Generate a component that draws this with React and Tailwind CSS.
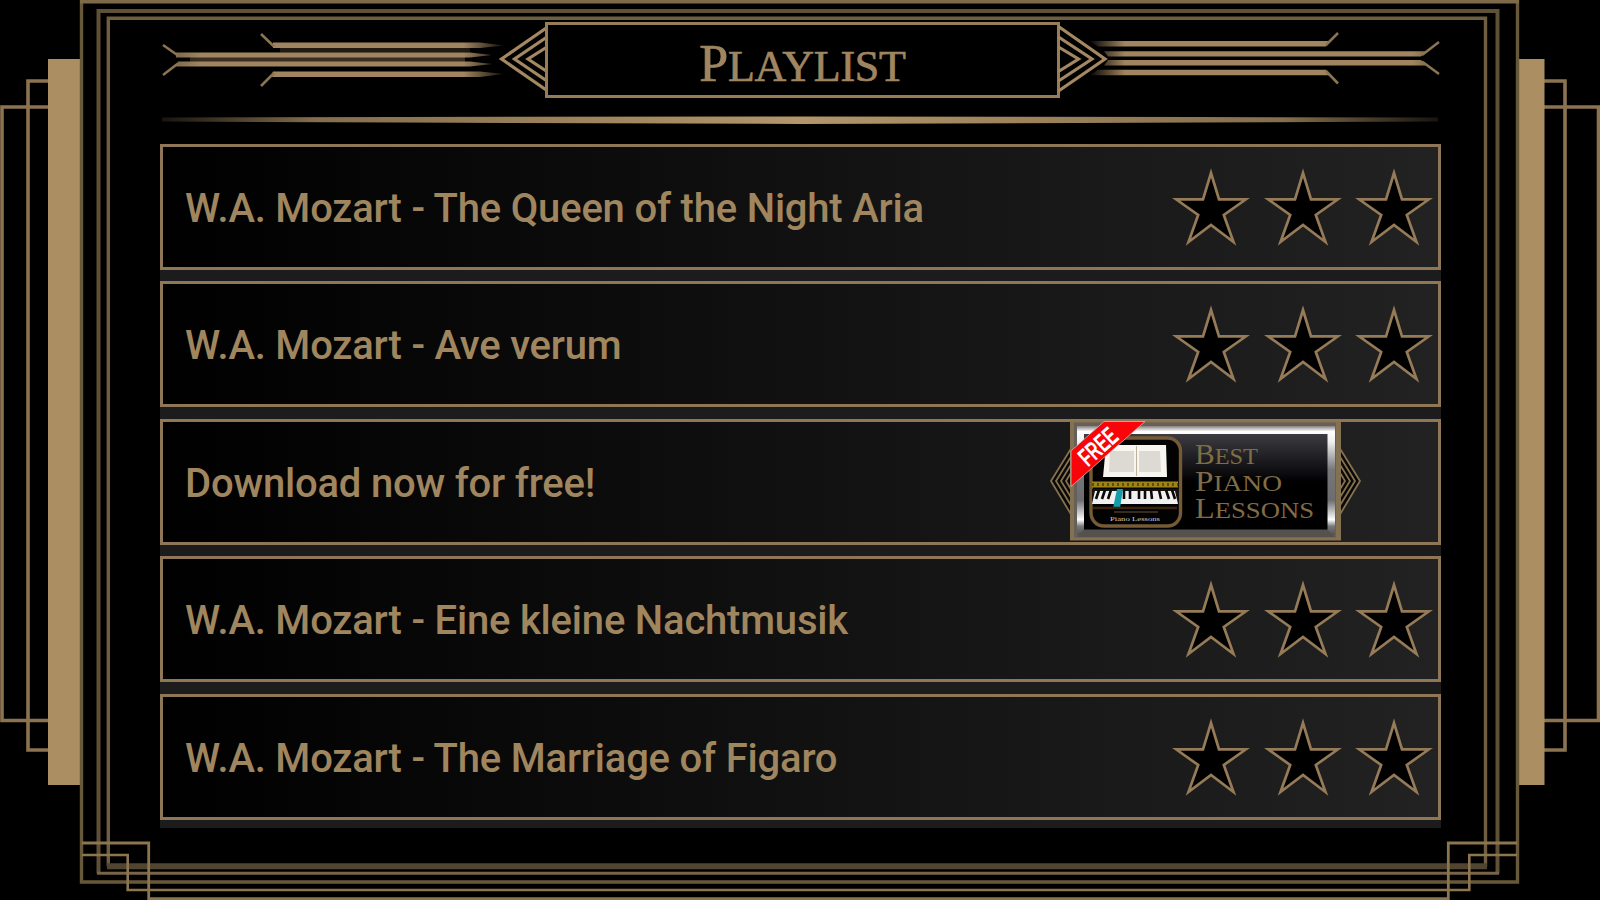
import React from "react";

const TRACKS = [
  { id: 1, title: "W.A. Mozart - The Queen of the Night Aria" },
  { id: 2, title: "W.A. Mozart - Ave verum" },
  { id: 3, title: "Download now for free!", promo: true },
  { id: 4, title: "W.A. Mozart - Eine kleine Nachtmusik" },
  { id: 5, title: "W.A. Mozart - The Marriage of Figaro" },
];

function Frame() {
  return (
    <svg
      className="absolute inset-0 pointer-events-none"
      width="1600"
      height="900"
      viewBox="0 0 1600 900"
      fill="none"
      aria-hidden="true"
    >
      {/* side wings */}
      <g stroke="#8c7350" strokeWidth="3.6">
        <path d="M49 81H28V750H49" />
        <path d="M1544 81H1565V750H1544" />
        <path d="M49 107H2V720.5H49" />
        <path d="M1544 107H1598.5V720.5H1544" />
      </g>
      <rect x="48" y="59" width="33.5" height="726" fill="#ab8f63" />
      <rect x="1517.5" y="59" width="27" height="726" fill="#ab8f63" />

      {/* nested frame lines */}
      <path d="M81.5 0V882H1517.5V0" stroke="#68583a" strokeWidth="3.4" />
      <path d="M80 1.6H1519" stroke="#7e6a48" strokeWidth="3.6" />
      <path d="M98.5 873.5V11H1497.5V873.5" stroke="#5f5135" strokeWidth="4" />
      <path d="M97 873.3H1499" stroke="#796449" strokeWidth="3" />
      <path d="M108.3 866.5V18.3H1485.5V866.5" stroke="#6f5e40" strokeWidth="3.4" />
      <path d="M107 866.3H1487" stroke="#4f4530" strokeWidth="6" />

      {/* stepped corners */}
      <g stroke="#8c7650" strokeWidth="2.8">
        <path d="M82 843H148.7V898.7H1448.3V843H1517" />
        <path d="M82 855H127.7V890H1469.3V855H1517" strokeWidth="2.6" />
      </g>
    </svg>
  );
}

function LeftOrnament() {
  return (
    <svg width="385" height="76" viewBox="160 22 385 76" fill="none" className="shrink-0 overflow-visible">
      <defs>
        <linearGradient id="fadeL" gradientUnits="userSpaceOnUse" x1="160" y1="0" x2="505" y2="0">
          <stop offset="0" stopColor="#6c5b40" />
          <stop offset="0.12" stopColor="#a08560" />
          <stop offset="0.88" stopColor="#a08560" />
          <stop offset="1" stopColor="#a08560" stopOpacity="0.1" />
        </linearGradient>
      </defs>
      <path d="M190 57H465V62H190Z" fill="url(#fadeL)" opacity="0.35" />
      <path d="M280 47.5H470V52.5H280Z" fill="url(#fadeL)" opacity="0.2" />
      <g fill="url(#fadeL)">
        <path d="M273 42.6H480L504 45.5L480 48H273Z" />
        <path d="M176 52.6H470L492 55L470 57.6H176Z" />
        <path d="M178 61.6H470L492 64L470 66.6H176Z" />
        <path d="M273 71.6H480L504 74L480 77H271Z" />
      </g>
      <g stroke="#8a7452" strokeWidth="2.6">
        <path d="M163 45L178 55.5M163 75L178 63.5M261 34L274 46.5M261 86L274 73" />
      </g>
      <g stroke="#a38862" strokeWidth="3.2">
        <path d="M547 27.5L501.5 59L547 90.5" />
        <path d="M547 37L514.5 59L547 81" />
        <path d="M547 47L528 59L547 71.5" />
      </g>
    </svg>
  );
}

function RightOrnament() {
  return (
    <svg width="381" height="76" viewBox="1060 22 381 76" fill="none" className="shrink-0 overflow-visible">
      <defs>
        <linearGradient id="fadeR" gradientUnits="userSpaceOnUse" x1="1090" y1="0" x2="1440" y2="0">
          <stop offset="0" stopColor="#a08560" stopOpacity="0.05" />
          <stop offset="0.1" stopColor="#a08560" />
          <stop offset="0.92" stopColor="#a08560" />
          <stop offset="1" stopColor="#6c5b40" />
        </linearGradient>
      </defs>
      <g fill="url(#fadeR)">
        <path d="M1090 41H1329L1326 46.4H1098Z" />
        <path d="M1104 51.2H1426L1421 56.6H1108Z" />
        <path d="M1108 60H1421L1426 65.4H1104Z" />
        <path d="M1098 69.8H1326L1329 75.2H1090Z" />
      </g>
      <g stroke="#8a7452" strokeWidth="2.6">
        <path d="M1422 55L1439 42M1422 61.5L1439 74M1326 45L1338 33M1326 71L1338 83.5" />
      </g>
      <g stroke="#a38862" strokeWidth="3.2">
        <path d="M1058.5 26.5L1105 59L1058.5 91" />
        <path d="M1058.5 37L1092 59L1058.5 81" />
        <path d="M1058.5 47L1078.5 59L1058.5 71.5" />
      </g>
    </svg>
  );
}

function Divider() {
  return (
    <svg width="1281" height="10" viewBox="160 115 1281 10" className="mt-[17.5px] block">
      <defs>
        <linearGradient id="rule" x1="0" x2="1">
          <stop offset="0" stopColor="#a58a60" stopOpacity="0.15" />
          <stop offset="0.12" stopColor="#a58a60" stopOpacity="0.8" />
          <stop offset="0.5" stopColor="#b3966a" />
          <stop offset="0.88" stopColor="#a58a60" stopOpacity="0.8" />
          <stop offset="1" stopColor="#a58a60" stopOpacity="0.15" />
        </linearGradient>
      </defs>
      <path d="M162 117.5L400 117L800 116.4L1200 117L1438 117.5V121.5L1200 122.5L800 124L400 122.5L162 121.5Z" fill="url(#rule)" />
    </svg>
  );
}

function Star() {
  return (
    <svg width="78" height="78" viewBox="0 0 78 78" className="shrink-0">
      <path
        d="M39 5L47 31.3H74L51.8 47L61.5 74L39 57L16.5 74L26.2 47L4 31.3H31Z"
        fill="#000"
        stroke="#957b58"
        strokeWidth="2.7"
      />
    </svg>
  );
}

function PromoBadge() {
  return (
    <svg width="314" height="128" viewBox="1048 418 314 128" className="shrink-0 overflow-visible">
      <defs>
        <linearGradient id="bezel" x1="0" y1="0" x2="0" y2="1">
          <stop offset="0" stopColor="#85807c" />
          <stop offset="0.05" stopColor="#ffffff" />
          <stop offset="0.14" stopColor="#f1f1f1" />
          <stop offset="0.4" stopColor="#77777a" />
          <stop offset="0.68" stopColor="#6d6d70" />
          <stop offset="0.86" stopColor="#ffffff" />
          <stop offset="0.92" stopColor="#77777a" />
          <stop offset="1" stopColor="#55504e" />
        </linearGradient>
        <linearGradient id="gloss" x1="0" y1="0" x2="0" y2="1">
          <stop offset="0" stopColor="#3c3c41" />
          <stop offset="0.42" stopColor="#0b0b0e" />
          <stop offset="0.5" stopColor="#000" />
        </linearGradient>
      </defs>

      {/* chevrons on both sides */}
      <g fill="#080808" stroke="#85714d" strokeWidth="1.8">
        <path d="M1072 447L1051 481L1072 516" />
        <path d="M1072 455L1056 481L1072 507" />
        <path d="M1072 463L1061 481L1072 499" />
        <path d="M1072 471L1066 481L1072 491" />
        <path d="M1339 447L1360 481L1339 516" />
        <path d="M1339 455L1355 481L1339 507" />
        <path d="M1339 463L1350 481L1339 499" />
        <path d="M1339 471L1345 481L1339 491" />
      </g>

      <rect x="1070" y="421.5" width="271" height="119" fill="#84714f" />
      <rect x="1074" y="422.5" width="262" height="115" fill="#66605b" />
      <rect x="1077" y="426" width="258" height="109" fill="url(#bezel)" />
      <path d="M1077 537L1084 529H1327L1335 537Z" fill="#55514f" />
      <rect x="1084" y="434" width="243.5" height="95.5" fill="url(#gloss)" />

      {/* app icon */}
      <rect x="1091" y="438" width="89.5" height="88" rx="13" fill="#020202" stroke="#745a36" strokeWidth="3.4" />
      <path d="M1106 445L1166 445L1167 477H1103Z" fill="#f6f5ef" />
      <path d="M1110 451H1134V472H1109ZM1139 451H1160L1161 472H1139Z" fill="#dcdad2" />
      <path d="M1136.5 446V476" stroke="#b9b199" strokeWidth="1" />
      <path d="M1092 484.5H1178" stroke="#9d8414" strokeWidth="6" />
      <path d="M1092 484.5H1178" stroke="#594b0e" strokeWidth="3" strokeDasharray="2 3" />
      <rect x="1092" y="489" width="86" height="14" fill="#17130f" />
      <path d="M1092 504L1095 491H1175L1178 504Z" fill="#f1f1f1" />
      <path
        d="M1099 490L1096 499M1105 490L1102 499M1111 490L1108 499M1124 490V499M1130 490V499M1139 490V499M1145 490V499M1151 490L1152 499M1159 490L1161 499M1166 490L1169 499M1172 490L1175 499"
        stroke="#0c0a09"
        strokeWidth="2.6"
      />
      <path d="M1117 489H1123L1120 508H1113Z" fill="#149cab" />
      <path d="M1093 508H1177" stroke="#3a230f" strokeWidth="2.5" />
      <path d="M1114 512H1158" stroke="#6e5430" strokeWidth="1.2" />
      <text x="1135" y="520.5" textAnchor="middle" textLength="50" lengthAdjust="spacingAndGlyphs" fontSize="7" fill="#c8c8c8" className="font-['Liberation_Serif',serif]">
        Piano Lessons
      </text>

      <g fill="#806d45" className="font-['Liberation_Serif',serif]" fontSize="24">
        <text x="1195" y="464" textLength="63" lengthAdjust="spacingAndGlyphs"><tspan fontSize="29">B</tspan>EST</text>
        <text x="1195" y="491" textLength="87" lengthAdjust="spacingAndGlyphs"><tspan fontSize="29">P</tspan>IANO</text>
        <text x="1195" y="518" textLength="119" lengthAdjust="spacingAndGlyphs"><tspan fontSize="29">L</tspan>ESSONS</text>
      </g>

      {/* corner ribbon */}
      <path d="M1104 421.5H1145L1071 486.5V451Z" fill="#f90509" stroke="#d9b8b0" strokeWidth="0.8" />
      <text
        transform="translate(1088 467.5) rotate(-42)"
        textLength="43"
        lengthAdjust="spacingAndGlyphs"
        fontSize="26"
        fill="#fff"
        className="font-['Liberation_Sans',sans-serif] font-bold"
      >
        FREE
      </text>
    </svg>
  );
}

function TrackRow({ track }) {
  return (
    <li className="flex h-[126px] shrink-0 items-center justify-between border-[3px] border-[#8f7656] bg-linear-to-r/srgb from-black to-[#222222] pl-[22px]">
      <span className="whitespace-nowrap pt-[4px] font-['Roboto',sans-serif] text-[40px] font-medium leading-none tracking-[-0.2px] text-[#a0865f]">
        {track.title}
      </span>
      {track.promo ? (
        <div className="mr-[76px]">
          <PromoBadge />
        </div>
      ) : (
        <div className="mr-[5px] flex gap-[13.4px]">
          <Star />
          <Star />
          <Star />
        </div>
      )}
    </li>
  );
}

export default function App() {
  return (
    <div className="relative h-[900px] w-[1600px] overflow-hidden bg-black">
      <Frame />
      <main className="relative flex flex-col pl-[160px] pr-[159px] pt-[22px]">
        <header>
          <div className="flex h-[75.5px]">
            <LeftOrnament />
            <div className="flex w-[515px] shrink-0 items-center justify-center border-[3px] border-[#967d58] bg-black">
              <h1 className="whitespace-nowrap pt-[9px] font-['Liberation_Serif',serif] text-[44px] leading-none tracking-[-0.2px] text-[#a08660] [-webkit-text-stroke:0.7px_#a08660]">
                <span className="text-[52px]">P</span>LAYLIST
              </h1>
            </div>
            <RightOrnament />
          </div>
          <Divider />
        </header>
        <ul className="mt-[19px] flex w-[1281px] flex-col gap-[11.4px] bg-[#1c1c1d] pb-[8px]">
          {TRACKS.map((track) => (
            <TrackRow key={track.id} track={track} />
          ))}
        </ul>
      </main>
    </div>
  );
}
